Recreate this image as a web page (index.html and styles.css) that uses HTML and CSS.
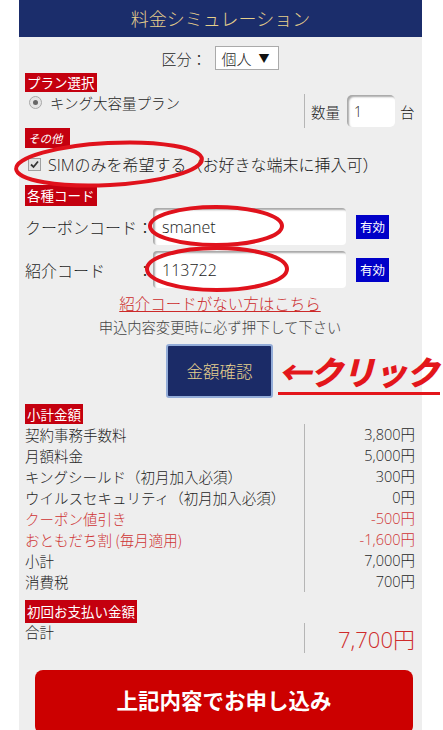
FILE: index.html
```html
<!DOCTYPE html>
<html lang="ja">
<head>
<meta charset="utf-8">
<title>料金シミュレーション</title>
<link rel="stylesheet" href="styles.css">
</head>
<body>
<div class="panel">
  <div class="head">料金シミュレーション</div>
  <div class="body">
    <div class="kubun"><span class="kubun-label">区分：</span><span class="select">個人<span class="arrow">▼</span></span></div>

    <div class="tag tag-plan">プラン選択</div>
    <div class="split plan">
      <div class="left plan-left"><span class="radio"><span class="dot"></span></span>キング大容量プラン</div>
      <div class="right qty">数量<span class="num">1</span>台</div>
    </div>

    <div class="tag tag-other">その他</div>
    <div class="check-row">
      <span class="check"><svg width="11" height="11" viewBox="0 0 11 11"><path d="M2 5.5 L4.5 8 L9 2.5" fill="none" stroke="#333" stroke-width="1.8"/></svg></span>SIMのみを希望する（お好きな端末に挿入可）
    </div>

    <div class="tag tag-code">各種コード</div>
    <div class="code-row">
      <span class="code-label">クーポンコード</span><span class="colon">：</span><span class="field">smanet</span><span class="valid">有効</span>
    </div>
    <div class="code-row second">
      <span class="code-label">紹介コード</span><span class="colon">：</span><span class="field">113722</span><span class="valid">有効</span>
    </div>

    <div class="link-line"><a class="link">紹介コードがない方はこちら</a></div>
    <div class="note">申込内容変更時に必ず押下して下さい</div>
    <div class="btn-line"><span class="calc-btn">金額確認</span></div>

    <div class="tag tag-sub">小計金額</div>
    <div class="split totals">
      <div class="left">
        <div>契約事務手数料</div>
        <div>月額料金</div>
        <div>キングシールド（初月加入必須）</div>
        <div>ウイルスセキュリティ（初月加入必須）</div>
        <div class="red">クーポン値引き</div>
        <div class="red">おともだち割 (毎月適用)</div>
        <div>小計</div>
        <div>消費税</div>
      </div>
      <div class="right vals">
        <div>3,800円</div>
        <div>5,000円</div>
        <div>300円</div>
        <div>0円</div>
        <div class="red">-500円</div>
        <div class="red">-1,600円</div>
        <div>7,000円</div>
        <div>700円</div>
      </div>
    </div>

    <div class="tag tag-first">初回お支払い金額</div>
    <div class="split grand">
      <div class="left grand-left">合計</div>
      <div class="right grand-val">7,700円</div>
    </div>

    <div class="apply">上記内容でお申し込み</div>
  </div>
</div>

<svg class="marks" width="443" height="730" viewBox="0 0 443 730">
  <ellipse cx="109" cy="164" rx="93" ry="21" transform="rotate(-3 109 164)" fill="none" stroke="#e0121c" stroke-width="4"/>
  <ellipse cx="216" cy="226" rx="66" ry="19" fill="none" stroke="#e0121c" stroke-width="4"/>
  <ellipse cx="217" cy="269" rx="70" ry="21" fill="none" stroke="#e0121c" stroke-width="4"/>
</svg>
<div class="click-note">←クリック</div>
</body>
</html>
```

FILE: styles.css
```css
html, body {
  margin: 0;
  padding: 0;
  background: #ffffff;
}
body {
  font-family: "Open Sans", "Noto Sans CJK JP", sans-serif;
  font-weight: 300;
  color: #1e1e1e;
  width: 443px;
  height: 730px;
  overflow: hidden;
  position: relative;
}
.panel {
  width: 403px;
  margin-left: 19px;
  background: #eeeeee;
  min-height: 730px;
}
.head {
  height: 37px;
  line-height: 37px;
  background: #1b2d6b;
  color: #e6cf8b;
  font-family: "Noto Sans CJK JP", sans-serif;
  font-size: 18px;
  text-align: center;
}
.body {
  padding: 0 7px 0 6px;
}
.kubun {
  display: flex;
  justify-content: center;
  align-items: center;
  margin-top: 9px;
  height: 24px;
  font-family: "Noto Sans CJK JP", sans-serif;
  font-size: 15px;
}
.kubun-label {
  margin-right: 8px;
}
.select {
  display: inline-flex;
  align-items: center;
  height: 22px;
  width: 56px;
  padding-left: 6px;
  background: #ffffff;
  border: 1px solid #aaaaaa;
  font-size: 15px;
}
.arrow {
  font-size: 11px;
  margin-left: 7px;
  color: #111;
  font-weight: 400;
}
.tag {
  display: inline-block;
  background: #c4000f;
  color: #ffffff;
  font-family: "Noto Sans CJK JP", sans-serif;
  font-weight: 400;
  font-size: 13.5px;
  padding: 0 2px;
  line-height: 19px;
  height: 19px;
  vertical-align: top;
}
.tag-plan {
  margin-top: 3px;
  display: block;
  width: fit-content;
}
.tag-other {
  display: block;
  width: fit-content;
  font-size: 11.5px;
  font-style: italic;
  line-height: 20px;
  height: 20px;
  padding: 0 7px 0 3px;
}
.tag-code {
  display: block;
  width: fit-content;
  margin-top: 5px;
  line-height: 21px;
  height: 21px;
}
.tag-sub {
  display: block;
  width: fit-content;
  margin-top: 6px;
  line-height: 20px;
  height: 20px;
}
.tag-first {
  display: block;
  width: fit-content;
  margin-top: 8px;
  line-height: 23px;
  height: 23px;
}
.split {
  display: flex;
}
.split .left {
  flex: 1;
}
.split .right {
  width: 111px;
  border-left: 1px solid #b5b5b5;
  box-sizing: border-box;
}
.plan {
  height: 36px;
}
.plan-left {
  display: flex;
  align-items: center;
  height: 20px;
  font-family: "Noto Sans CJK JP", sans-serif;
  font-size: 14.5px;
}
.radio {
  display: inline-flex;
  align-items: center;
  justify-content: center;
  width: 11px;
  height: 11px;
  border-radius: 50%;
  border: 1px solid #a8a8a8;
  background: #e4e4e4;
  margin: 0 8px 0 4px;
}
.dot {
  width: 5px;
  height: 5px;
  border-radius: 50%;
  background: #666;
}
.qty {
  display: flex;
  align-items: center;
  padding-left: 6px;
  margin-top: 2px;
  height: 34px;
  font-family: "Noto Sans CJK JP", sans-serif;
  font-size: 14.5px;
}
.num {
  display: inline-flex;
  align-items: center;
  width: 48px;
  height: 32px;
  box-sizing: border-box;
  padding-left: 7px;
  margin: 0 5px 0 7px;
  background: #ffffff;
  border-radius: 5px;
  box-shadow: inset 2px 2px 2px rgba(0,0,0,0.35);
  font-family: "Open Sans", sans-serif;
  font-size: 14px;
}
.check-row {
  display: flex;
  align-items: center;
  height: 32px;
  font-family: "Open Sans", "Noto Sans CJK JP", sans-serif;
  font-size: 16px;
  color: #1a1a1a;
}
.check {
  display: inline-flex;
  align-items: center;
  justify-content: center;
  width: 11px;
  height: 11px;
  border: 1px solid #a0a0a0;
  background: #e2e2e2;
  margin: 0 7px 0 3px;
}
.code-row {
  display: flex;
  align-items: center;
  height: 37px;
  margin-top: 2px;
  font-family: "Noto Sans CJK JP", sans-serif;
  font-size: 16px;
}
.code-row.second {
  margin-top: 6px;
}
.code-label {
  width: 112px;
}
.colon {
  width: 16px;
}
.field {
  display: inline-flex;
  align-items: center;
  width: 193px;
  height: 37px;
  box-sizing: border-box;
  padding-left: 9px;
  background: #ffffff;
  border-radius: 4px;
  box-shadow: inset 2px 2px 2px rgba(0,0,0,0.35);
  font-family: "Open Sans", sans-serif;
  font-size: 16px;
  color: #1a1a1a;
}
.valid {
  display: inline-flex;
  align-items: center;
  justify-content: center;
  width: 33px;
  height: 24px;
  margin-left: 10px;
  background: #0000c8;
  color: #ffffff;
  font-weight: 400;
  font-size: 12.5px;
}
.link-line {
  text-align: center;
  margin-top: 6px;
  line-height: 18px;
}
.link {
  color: #cc2a2a;
  text-decoration: underline;
  font-family: "Noto Sans CJK JP", sans-serif;
  font-size: 15.5px;
}
.note {
  text-align: center;
  font-family: "Noto Sans CJK JP", sans-serif;
  font-size: 14.3px;
  color: #444;
  line-height: 18px;
  margin-top: 5px;
}
.btn-line {
  display: flex;
  justify-content: center;
  margin-top: 8px;
  padding-right: 1px;
}
.calc-btn {
  display: inline-flex;
  align-items: center;
  justify-content: center;
  width: 107px;
  height: 54px;
  box-sizing: border-box;
  background: #1b2b67;
  border: 2px solid #93acd8;
  border-radius: 3px;
  color: #e6d08d;
  font-family: "Noto Sans CJK JP", sans-serif;
  font-size: 16.5px;
}
.totals {
  font-family: "Noto Sans CJK JP", sans-serif;
  font-size: 14.5px;
  line-height: 21px;
}
.totals .vals {
  text-align: right;
  font-family: "Open Sans", "Noto Sans CJK JP", sans-serif;
  font-size: 14.5px;
}
.red {
  color: #cf3434;
}
.grand {
  height: 30px;
}
.grand-left {
  font-family: "Noto Sans CJK JP", sans-serif;
  font-size: 14.5px;
  line-height: 18px;
}
.grand-val {
  text-align: right;
  color: #cf2b2b;
  font-family: "Open Sans", "Noto Sans CJK JP", sans-serif;
  font-size: 22px;
  line-height: 28px;
  padding-top: 2px;
}
.apply {
  width: 378px;
  height: 64px;
  margin: 17px 0 0 10px;
  background: #cc0000;
  border-radius: 8px;
  color: #ffffff;
  font-family: "Noto Sans CJK JP", sans-serif;
  font-weight: 700;
  font-size: 21.5px;
  display: flex;
  align-items: center;
  justify-content: center;
  padding-bottom: 6px;
  box-sizing: border-box;
}
.marks {
  position: absolute;
  left: 0;
  top: 0;
  pointer-events: none;
}
.click-note {
  position: absolute;
  left: 278px;
  top: 350px;
  width: 162px;
  color: #e3161b;
  font-family: "Noto Sans CJK JP", sans-serif;
  font-weight: 900;
  font-style: italic;
  font-size: 33px;
  line-height: 42px;
  letter-spacing: -1px;
  border-bottom: 3px solid #e3161b;
  white-space: nowrap;
}
```
